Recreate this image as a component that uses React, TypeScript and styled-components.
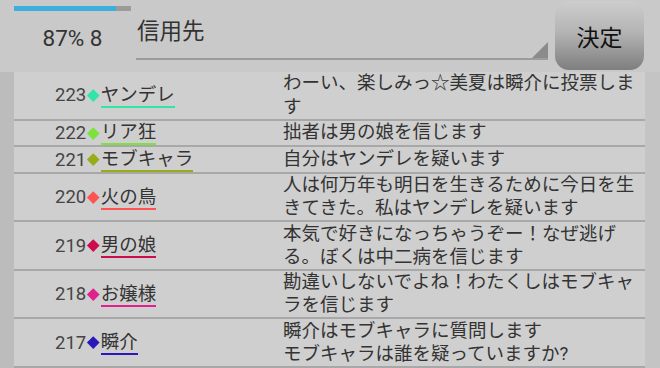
import styled, { createGlobalStyle } from "styled-components";

type Post = {
  no: number;
  name: string;
  color: string;
  text: string;
};

const posts: Post[] = [
  { no: 223, name: "ヤンデレ", color: "#2fe6a6", text: "わーい、楽しみっ☆美夏は瞬介に投票します" },
  { no: 222, name: "リア狂", color: "#7de23e", text: "拙者は男の娘を信じます" },
  { no: 221, name: "モブキャラ", color: "#9aab18", text: "自分はヤンデレを疑います" },
  { no: 220, name: "火の鳥", color: "#ff5353", text: "人は何万年も明日を生きるために今日を生きてきた。私はヤンデレを疑います" },
  { no: 219, name: "男の娘", color: "#cc0c4e", text: "本気で好きになっちゃうぞー！なぜ逃げる。ぼくは中二病を信じます" },
  { no: 218, name: "お嬢様", color: "#e0228e", text: "勘違いしないでよね！わたくしはモブキャラを信じます" },
  { no: 217, name: "瞬介", color: "#2a18b8", text: "瞬介はモブキャラに質問します\nモブキャラは誰を疑っていますか?" },
];

export default function App() {
  const progress = 0.87;

  return (
    <>
      <GlobalStyle />
      <Screen>
        <Header>
          <Status>
            <Progress>
              <ProgressFill style={{ width: `${progress * 100}%` }} />
            </Progress>
            <Count>87% 8</Count>
          </Status>
          <Spinner>
            <SpinnerLabel>信用先</SpinnerLabel>
            <SpinnerCorner />
          </Spinner>
          <DecideButton type="button">決定</DecideButton>
        </Header>
        <Body>
          <Gutter $side="left" />
          <List>
            {posts.map((p) => (
              <Row key={p.no}>
                <Speaker>
                  <No>{p.no}</No>
                  <Mark $color={p.color} />
                  <Name $color={p.color}>{p.name}</Name>
                </Speaker>
                <Message>{p.text}</Message>
              </Row>
            ))}
          </List>
          <Gutter $side="right" />
        </Body>
      </Screen>
    </>
  );
}

const GlobalStyle = createGlobalStyle`
  html, body {
    margin: 0;
    padding: 0;
    background: #c9c9c9;
  }
  body {
    font-family: Roboto, "Noto Sans CJK JP", sans-serif;
    color: #3a3a3a;
  }
`;

const Screen = styled.div`
  width: 660px;
  height: 368px;
  overflow: hidden;
  display: flex;
  flex-direction: column;
  background: #c9c9c9;
`;

const Header = styled.header`
  height: 72px;
  flex: none;
  display: flex;
  align-items: flex-start;
  padding-left: 14px;
`;

const Status = styled.div`
  width: 117px;
  display: flex;
  flex-direction: column;
  align-items: center;
  padding-top: 6px;
`;

const Progress = styled.div`
  width: 100%;
  height: 5px;
  background: #9b9b9b;
`;

const ProgressFill = styled.div`
  height: 100%;
  background: #3cafdf;
`;

const Count = styled.div`
  margin-top: 14px;
  font-size: 22.5px;
  line-height: 26px;
  color: #333;
`;

const Spinner = styled.div`
  position: relative;
  margin-left: 5px;
  width: 412px;
  height: 60px;
  border-bottom: 2px solid #9c9c9c;
  padding: 16px 0 0 1px;
  box-sizing: border-box;
`;

const SpinnerLabel = styled.div`
  font-size: 22.5px;
  line-height: 30px;
  color: #333;
`;

const SpinnerCorner = styled.div`
  position: absolute;
  right: 0;
  bottom: 0;
  width: 0;
  height: 0;
  border-left: 16px solid transparent;
  border-bottom: 16px solid #8b8b8b;
`;

const DecideButton = styled.button`
  margin: 1px 0 0 7px;
  width: 89px;
  height: 69px;
  border: none;
  border-radius: 14px;
  background: linear-gradient(#cdcdcd 0%, #b4b4b4 45%, #7e7e7e 100%);
  font-family: Roboto, "Noto Sans CJK JP", sans-serif;
  font-size: 23px;
  color: #111;
  padding: 0;
  cursor: pointer;
`;

const Body = styled.main`
  flex: 1;
  display: flex;
  min-height: 0;
`;

const Gutter = styled.div<{ $side: "left" | "right" }>`
  flex: none;
  width: ${(p) => (p.$side === "left" ? "14px" : "15px")};
  background: ${(p) => (p.$side === "left" ? "#bcbcbc" : "#c4c4c4")};
`;

const List = styled.section`
  flex: 1;
  background: #cfcfcf;
  display: flex;
  flex-direction: column;
`;

const Row = styled.div`
  display: flex;
  align-items: center;
  border-bottom: 2px solid #a8a8a8;
  min-height: 23.5px;
`;

const Speaker = styled.div`
  flex: none;
  width: 269px;
  box-sizing: border-box;
  padding-left: 41px;
  display: flex;
  align-items: center;
  font-size: 18.5px;
`;

const No = styled.span`
  color: #444;
  line-height: 22px;
`;

const Mark = styled.span<{ $color: string }>`
  width: 8.5px;
  height: 8.5px;
  margin: 0 3px 0 3px;
  background: ${(p) => p.$color};
  transform: rotate(45deg);
`;

const Name = styled.span<{ $color: string }>`
  display: inline-block;
  line-height: 21px;
  border-bottom: 2px solid ${(p) => p.$color};
  margin-top: 2px;
  color: #333;
`;

const Message = styled.div`
  width: 362px;
  font-size: 18.5px;
  line-height: 23.3px;
  color: #333;
  white-space: pre-line;
  padding-top: 0.5px;
`;
